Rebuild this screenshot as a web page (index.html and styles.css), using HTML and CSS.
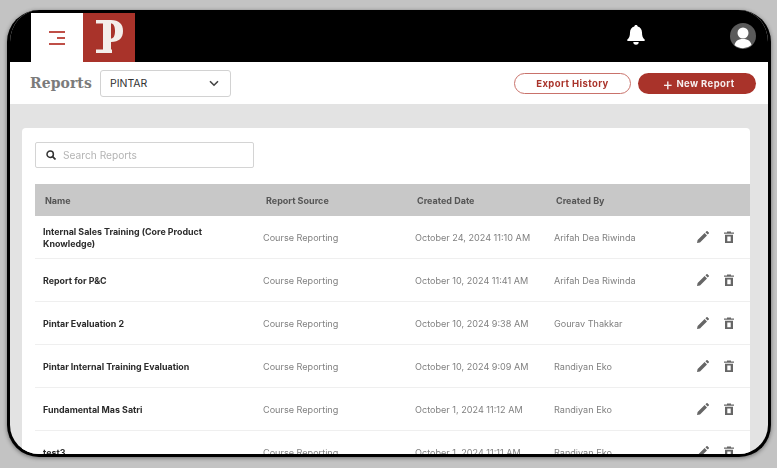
FILE: index.html
```html
<!DOCTYPE html>
<html lang="en">
<head>
<meta charset="utf-8">
<title>Reports</title>
<link rel="stylesheet" href="styles.css">
</head>
<body>
<div class="frame">
  <header class="topbar">
    <div class="menu-tab">
      <svg width="16" height="14" viewBox="0 0 16 14"><path d="M0 1h16M8 7h8M0 13h16" fill="none" stroke="#bf4f47" stroke-width="2"/></svg>
    </div>
    <div class="logo">
      <svg width="27" height="33" viewBox="0 0 27 33"><path fill="#f3eeea" fill-rule="evenodd" d="M0 0h15c8 0 12 4 12 11s-4 11-12 11v7.500h1V33H0v-3.500h7v-26H0zM15 3.500v15c2.500 0 4-2.500 4-7.500s-1.500-7.500-4-7.500z"/></svg>
    </div>
    <div class="topbar-right">
      <svg class="bell" width="18" height="20" viewBox="0 0 18 20"><path d="M9 0c1 0 1.700.7 1.700 1.600C13.500 2.300 15 4.700 15 7.500c0 3.500.8 5.400 2.600 7.100.5.500.2 1.400-.6 1.400H1c-.8 0-1.100-.9-.6-1.400C2.200 12.900 3 11 3 7.500c0-2.800 1.500-5.200 4.300-5.900C7.300.7 8 0 9 0z" fill="#fff"/><path d="M6.300 17h5.400a2.700 2.700 0 0 1-5.400 0z" fill="#fff"/></svg>
      <svg width="26" height="26" viewBox="0 0 26 26"><circle cx="13" cy="13" r="13" fill="#5a5a5a"/><circle cx="13" cy="10" r="5.500" fill="#fff"/><path d="M4.500 22c1-4.500 4.500-6 8.500-6s7.500 1.500 8.500 6a13 13 0 0 1-17 0z" fill="#fff"/></svg>
    </div>
  </header>
  <section class="subbar">
    <h1 class="title">Reports</h1>
    <div class="select">
      <span>PINTAR</span>
      <svg width="10" height="7" viewBox="0 0 10 7"><path d="M1 1.200l4 4 4-4" fill="none" stroke="#444" stroke-width="1.600"/></svg>
    </div>
    <div class="actions">
      <button class="btn btn-outline">Export History</button>
      <button class="btn btn-solid"><span class="plus">+</span>New Report</button>
    </div>
  </section>
  <main class="content">
    <div class="card">
      <div class="search">
        <svg width="10" height="10" viewBox="0 0 10 10"><circle cx="4.200" cy="4.200" r="3.200" fill="none" stroke="#333" stroke-width="1.500"/><path d="M6.600 6.600L9.500 9.500" stroke="#333" stroke-width="1.700"/></svg>
        <span>Search Reports</span>
      </div>
      <div class="table">
        <div class="thead">
          <span>Name</span><span>Report Source</span><span>Created Date</span><span>Created By</span>
        </div>
        <div class="row">
          <span class="name">Internal Sales Training (Core Product Knowledge)</span><span>Course Reporting</span><span>October 24, 2024 11:10 AM</span><span>Arifah Dea Riwinda</span>
          <div class="row-actions">
            <svg width="12" height="12" viewBox="0 0 12 12"><path d="M0 12l.6-3L7.600 2l2.400 2.400-7 7zM8.400 1.200L9.500.2c.3-.3.7-.3 1 0l1.300 1.300c.3.300.3.700 0 1l-1.100 1z" fill="#666"/></svg>
            <svg width="10" height="12" viewBox="0 0 10 12"><path d="M0 1.500h3V.5h4v1h3v1.300H0zM1 3.800h8V12H1zM3.300 5.500v4.700h3.400V5.500z" fill="#666" fill-rule="evenodd"/></svg>
          </div>
        </div>
        <div class="row">
          <span class="name">Report for P&amp;C</span><span>Course Reporting</span><span>October 10, 2024 11:41 AM</span><span>Arifah Dea Riwinda</span>
          <div class="row-actions">
            <svg width="12" height="12" viewBox="0 0 12 12"><path d="M0 12l.6-3L7.600 2l2.400 2.400-7 7zM8.400 1.200L9.500.2c.3-.3.7-.3 1 0l1.300 1.300c.3.300.3.700 0 1l-1.100 1z" fill="#666"/></svg>
            <svg width="10" height="12" viewBox="0 0 10 12"><path d="M0 1.500h3V.5h4v1h3v1.300H0zM1 3.800h8V12H1zM3.300 5.500v4.700h3.400V5.500z" fill="#666" fill-rule="evenodd"/></svg>
          </div>
        </div>
        <div class="row">
          <span class="name">Pintar Evaluation 2</span><span>Course Reporting</span><span>October 10, 2024 9:38 AM</span><span>Gourav Thakkar</span>
          <div class="row-actions">
            <svg width="12" height="12" viewBox="0 0 12 12"><path d="M0 12l.6-3L7.600 2l2.400 2.400-7 7zM8.400 1.200L9.500.2c.3-.3.7-.3 1 0l1.300 1.300c.3.300.3.700 0 1l-1.100 1z" fill="#666"/></svg>
            <svg width="10" height="12" viewBox="0 0 10 12"><path d="M0 1.500h3V.5h4v1h3v1.300H0zM1 3.800h8V12H1zM3.300 5.500v4.700h3.400V5.500z" fill="#666" fill-rule="evenodd"/></svg>
          </div>
        </div>
        <div class="row">
          <span class="name">Pintar Internal Training Evaluation</span><span>Course Reporting</span><span>October 10, 2024 9:09 AM</span><span>Randiyan Eko</span>
          <div class="row-actions">
            <svg width="12" height="12" viewBox="0 0 12 12"><path d="M0 12l.6-3L7.600 2l2.400 2.400-7 7zM8.400 1.200L9.500.2c.3-.3.7-.3 1 0l1.300 1.300c.3.300.3.700 0 1l-1.100 1z" fill="#666"/></svg>
            <svg width="10" height="12" viewBox="0 0 10 12"><path d="M0 1.500h3V.5h4v1h3v1.300H0zM1 3.800h8V12H1zM3.300 5.500v4.700h3.400V5.500z" fill="#666" fill-rule="evenodd"/></svg>
          </div>
        </div>
        <div class="row">
          <span class="name">Fundamental Mas Satri</span><span>Course Reporting</span><span>October 1, 2024 11:12 AM</span><span>Randiyan Eko</span>
          <div class="row-actions">
            <svg width="12" height="12" viewBox="0 0 12 12"><path d="M0 12l.6-3L7.600 2l2.400 2.400-7 7zM8.400 1.200L9.500.2c.3-.3.7-.3 1 0l1.300 1.300c.3.300.3.700 0 1l-1.100 1z" fill="#666"/></svg>
            <svg width="10" height="12" viewBox="0 0 10 12"><path d="M0 1.500h3V.5h4v1h3v1.300H0zM1 3.800h8V12H1zM3.300 5.500v4.700h3.400V5.500z" fill="#666" fill-rule="evenodd"/></svg>
          </div>
        </div>
        <div class="row">
          <span class="name">test3</span><span>Course Reporting</span><span>October 1, 2024 11:11 AM</span><span>Randiyan Eko</span>
          <div class="row-actions">
            <svg width="12" height="12" viewBox="0 0 12 12"><path d="M0 12l.6-3L7.600 2l2.400 2.400-7 7zM8.400 1.200L9.500.2c.3-.3.7-.3 1 0l1.300 1.300c.3.300.3.700 0 1l-1.100 1z" fill="#666"/></svg>
            <svg width="10" height="12" viewBox="0 0 10 12"><path d="M0 1.500h3V.5h4v1h3v1.300H0zM1 3.800h8V12H1zM3.300 5.500v4.700h3.400V5.500z" fill="#666" fill-rule="evenodd"/></svg>
          </div>
        </div>
      </div>
    </div>
  </main>
</div>
</body>
</html>
```
FILE: styles.css
```css
* { box-sizing: border-box; }
html, body { margin: 0; height: 100%; overflow: hidden; }
body { background: #c3c3c3; font-family: Inter, "Liberation Sans", sans-serif; padding: 10px 6px 11px 7px; }
.frame {
  height: 447px;
  border: 3px solid #000;
  border-top-width: 0;
  border-radius: 32px;
  background: #e3e3e3;
  overflow: hidden;
  box-shadow: 0 1px 4px rgba(0,0,0,.45);
  display: flex;
  flex-direction: column;
  filter: blur(.3px);
}
.topbar { height: 52px; background: #000; display: flex; flex: none; padding-left: 21px; padding-top: 3px; }
.menu-tab { width: 52px; background: #fff; display: flex; align-items: center; justify-content: center; }
.logo { width: 52px; background: #a9332a; display: flex; align-items: center; justify-content: center; padding-bottom: 3px; }
.topbar-right { margin-left: auto; display: flex; align-items: center; gap: 85px; padding-right: 12px; margin-top: -3px; }
.bell { margin-top: -2px; }
.subbar { height: 42px; background: #fff; display: flex; align-items: center; flex: none; padding: 0 12px 0 20px; }
.title { margin: 0; font: 700 15.500px/1 "DejaVu Serif Condensed", "DejaVu Serif", serif; color: #7b7b7b; width: 70px; letter-spacing: .1px; }
.select {
  width: 131px; height: 27px; border: 1px solid #d2d2d2; border-radius: 3px; background: #fff;
  display: flex; align-items: center; justify-content: space-between; padding: 0 11px 0 9px;
  font-size: 10.500px; color: #333;
}
.actions { margin-left: auto; display: flex; gap: 7px; }
.btn {
  height: 21px; border-radius: 11px; font: 700 9.500px/1 Inter, sans-serif; letter-spacing: .4px;
  display: flex; align-items: center; justify-content: center; padding: 1px 0 0;
}
.btn-outline { width: 117px; background: #fff; color: #a9332a; border: 1px solid #c9726b; }
.btn-solid { width: 118px; background: #a9332a; color: #f6eeee; border: 0; padding-left: 3px; }
.plus { font-size: 16px; font-weight: 400; margin-right: 3px; }
.content { flex: 1; min-height: 0; padding: 24px 18px 0 12px; overflow: hidden; }
.card { background: #fff; border-radius: 4px; height: 340px; padding: 14px 0 0 13px; overflow: hidden; }
.search {
  width: 219px; height: 26px; border: 1px solid #d4d4d4; border-radius: 2px;
  display: flex; align-items: center; gap: 7px; padding-left: 10px; font-size: 10.200px; color: #b4b4b4;
}
.table { margin-top: 16px; }
.thead, .row { display: grid; align-items: center; }
.thead { height: 32px; background: #c8c8c8; padding-left: 10px; font-size: 9px; font-weight: 700; color: #555; grid-template-columns: 221px 151px 139px 1fr; }
.row { height: 43px; padding-left: 8px; border-bottom: 1px solid #efefef; font-size: 9.100px; color: #808080; grid-template-columns: 220px 152px 139px 1fr 60px; }
.name { font-weight: 700; color: #2b2b2b; font-size: 8.900px; line-height: 12px; padding: 2px 20px 0 0; }
.row-actions { display: flex; align-items: center; justify-content: flex-end; gap: 15px; padding-right: 16px; }
```
